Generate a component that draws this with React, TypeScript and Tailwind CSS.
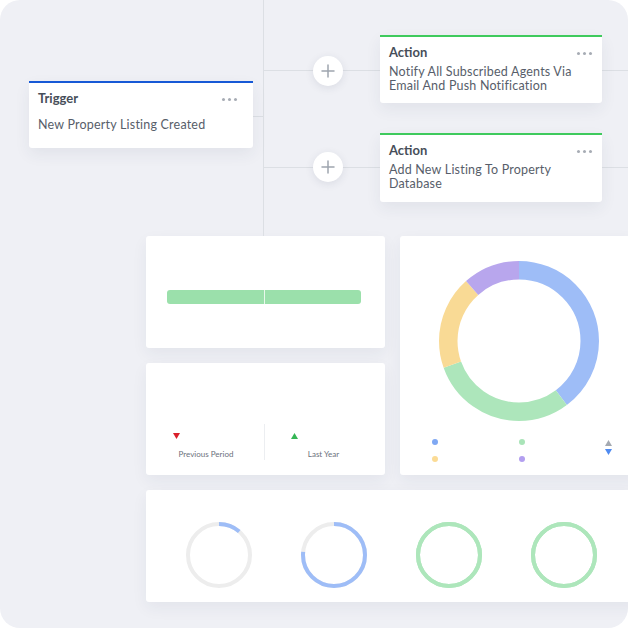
import React from "react";

const font = { fontFamily: "Lato, 'Open Sans', 'Liberation Sans', sans-serif" };

function Dots() {
  return (
    <div className="flex gap-[3px] pt-[2px]">
      <span className="w-[3px] h-[3px] rounded-full bg-[#a7acb4]" />
      <span className="w-[3px] h-[3px] rounded-full bg-[#a7acb4]" />
      <span className="w-[3px] h-[3px] rounded-full bg-[#a7acb4]" />
    </div>
  );
}

function FlowCard({
  title,
  lines,
  accent,
  className,
  headerPad = "pr-[10px]",
  bodyPad = "pt-[5px]",
}: {
  title: string;
  lines: string[];
  accent: string;
  className: string;
  headerPad?: string;
  bodyPad?: string;
}) {
  return (
    <div
      className={`absolute bg-white rounded-b-[3px] border-t-2 ${accent} shadow-[0_6px_16px_rgba(40,50,80,0.07)] ${className}`}
    >
      <div className={`flex items-center justify-between pl-[9px] pt-[7px] ${headerPad}`}>
        <span className="text-[13px] font-bold text-[#474e59] leading-[16px]">{title}</span>
        <Dots />
      </div>
      <div
        className={`pl-[9px] text-[12.5px] tracking-[0.2px] text-[#575e6a] leading-[13.5px] ${bodyPad}`}
      >
        {lines.map((l) => (
          <div key={l}>{l}</div>
        ))}
      </div>
    </div>
  );
}

function PlusButton({ className }: { className: string }) {
  return (
    <div
      className={`absolute w-[30px] h-[30px] rounded-full bg-white shadow-[0_2px_8px_rgba(40,50,80,0.10)] flex items-center justify-center ${className}`}
    >
      <svg width="14" height="14" viewBox="0 0 14 14">
        <path d="M7 1v12M1 7h12" stroke="#9ea5af" strokeWidth="1.5" strokeLinecap="round" />
      </svg>
    </div>
  );
}

const donutR = 70.75;
const donutC = 2 * Math.PI * donutR;
const segments = [
  { from: 0, to: 143, color: "#9ebdf7" },
  { from: 143, to: 250, color: "#ade6bb" },
  { from: 250, to: 318, color: "#f9da95" },
  { from: 318, to: 360, color: "#b8a6ed" },
];

function Donut() {
  return (
    <svg width="160" height="160" viewBox="0 0 160 160">
      <g transform="rotate(-90 80 80)">
        {segments.map((s) => (
          <circle
            key={s.color}
            cx="80"
            cy="80"
            r={donutR}
            fill="none"
            stroke={s.color}
            strokeWidth="18.5"
            strokeDasharray={`${((s.to - s.from) / 360) * donutC} ${donutC}`}
            strokeDashoffset={-(s.from / 360) * donutC}
          />
        ))}
      </g>
    </svg>
  );
}

function Ring({ pct, color, track }: { pct: number; color: string; track: string }) {
  const r = 31;
  const c = 2 * Math.PI * r;
  return (
    <svg width="66" height="66" viewBox="0 0 66 66">
      <circle cx="33" cy="33" r={r} fill="none" stroke={track} strokeWidth="4" />
      <circle
        cx="33"
        cy="33"
        r={r}
        fill="none"
        stroke={color}
        strokeWidth="4"
        strokeDasharray={`${pct * c} ${c}`}
        transform="rotate(-90 33 33)"
      />
    </svg>
  );
}

const card = "bg-white rounded-[3px] shadow-[0_6px_16px_rgba(40,50,80,0.06)]";

export default function App() {
  return (
    <div className="w-[628px] h-[628px] bg-white" style={font}>
      <div className="w-[628px] h-[628px] rounded-[20px] bg-[#eff0f5] overflow-hidden">
        {/* workflow diagram */}
        <div className="relative h-[236px]">
          <div className="absolute left-[263px] top-0 w-px h-[236px] bg-[#dcdfe4]" />
          <div className="absolute left-[240px] top-[116px] w-[24px] h-px bg-[#dcdfe4]" />
          <div className="absolute left-[263px] top-[70px] w-[365px] h-px bg-[#dcdfe4]" />
          <div className="absolute left-[263px] top-[167px] w-[365px] h-px bg-[#dcdfe4]" />

          <FlowCard
            title="Trigger"
            lines={["New Property Listing Created"]}
            accent="border-[#1759d6]"
            className="left-[29px] top-[81px] w-[224px] h-[67px]"
            headerPad="pr-[16px]"
            bodyPad="pt-[12px]"
          />
          <PlusButton className="left-[313px] top-[56px]" />
          <PlusButton className="left-[313px] top-[152px]" />
          <FlowCard
            title="Action"
            lines={["Notify All Subscribed Agents Via", "Email And Push Notification"]}
            accent="border-[#3fca5d]"
            className="left-[380px] top-[35px] w-[222px] h-[68px]"
          />
          <FlowCard
            title="Action"
            lines={["Add New Listing To Property", "Database"]}
            accent="border-[#3fca5d]"
            className="left-[380px] top-[133px] w-[222px] h-[69px]"
          />
        </div>

        {/* dashboard widgets */}
        <div className="ml-[146px] grid grid-cols-[239px_240px] gap-x-[15px] gap-y-[15px]">
          <div className="flex flex-col gap-[15px]">
            <div className={`${card} h-[112px] pt-[54px] pl-[21px]`}>
              <div className="flex w-[194px] h-[14px] rounded-[3px] overflow-hidden">
                <div className="w-[97px] bg-[#9be0ab]" />
                <div className="w-px bg-[#e9f8ec]" />
                <div className="flex-1 bg-[#9be0ab]" />
              </div>
            </div>
            <div className={`${card} h-[112px] pt-[61px] flex`}>
              <div className="w-[119px] h-[36px] border-r border-[#eceef1] flex flex-col">
                <div className="pl-[27px] pt-[9px] h-[25px]">
                  <svg width="7" height="6" viewBox="0 0 7 6">
                    <path d="M0 0h7L3.5 6z" fill="#d9202b" />
                  </svg>
                </div>
                <div className="text-center text-[8px] text-[#6b717c] leading-[10px] pl-[2px]">Previous Period</div>
              </div>
              <div className="w-[120px] h-[36px] flex flex-col">
                <div className="pl-[26px] pt-[9px] h-[25px]">
                  <svg width="7" height="6" viewBox="0 0 7 6">
                    <path d="M3.5 0L7 6H0z" fill="#35b655" />
                  </svg>
                </div>
                <div className="text-center text-[8px] text-[#6b717c] leading-[10px] pr-[3px]">Last Year</div>
              </div>
            </div>
          </div>

          <div className={`${card} h-[239px] pt-[25px] pl-[39px] flex flex-col`}>
            <Donut />
            <div className="flex mt-[18px] -ml-[7px]">
              <div className="w-[87px] flex flex-col gap-[11px]">
                <span className="w-[6px] h-[6px] rounded-full bg-[#7fa8f3]" />
                <span className="w-[6px] h-[6px] rounded-full bg-[#fbdb95]" />
              </div>
              <div className="w-[86px] flex flex-col gap-[11px]">
                <span className="w-[6px] h-[6px] rounded-full bg-[#a9e4b8]" />
                <span className="w-[6px] h-[6px] rounded-full bg-[#b39ff0]" />
              </div>
              <div className="flex flex-col gap-[3px] pt-[1px]">
                <svg width="7" height="6" viewBox="0 0 7 6">
                  <path d="M3.5 0L7 6H0z" fill="#a4a9b1" />
                </svg>
                <svg width="7" height="6" viewBox="0 0 7 6">
                  <path d="M0 0h7L3.5 6z" fill="#4f8bf1" />
                </svg>
              </div>
            </div>
          </div>

          <div className={`${card} col-span-2 h-[112px] pt-[32px] pl-[40px] flex gap-[49px]`}>
            <Ring pct={0.113} color="#9ebdf7" track="#ededed" />
            <Ring pct={0.765} color="#9ebdf7" track="#ededed" />
            <Ring pct={1} color="#ade6bb" track="#ade6bb" />
            <Ring pct={1} color="#ade6bb" track="#ade6bb" />
          </div>
        </div>
      </div>
    </div>
  );
}
